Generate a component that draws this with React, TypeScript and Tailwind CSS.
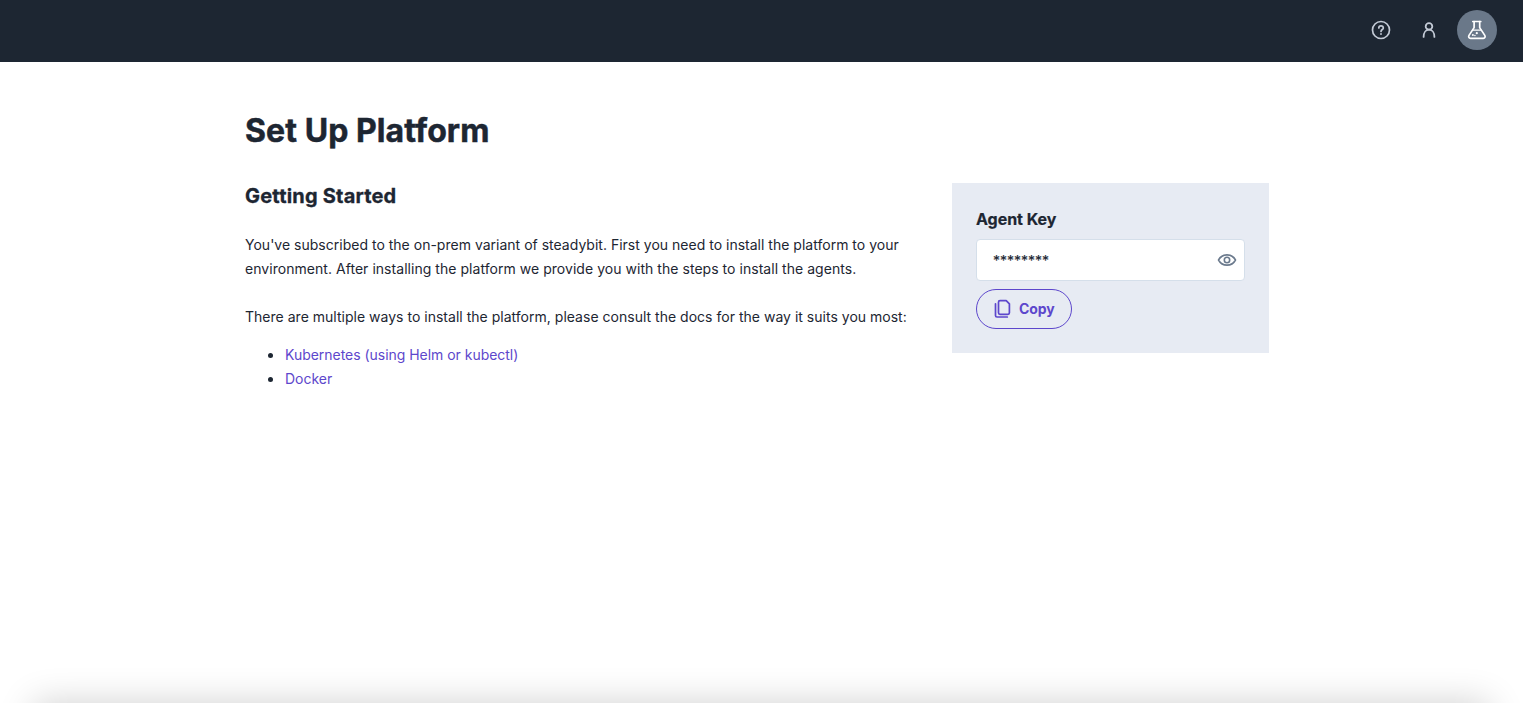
import React from "react";

function HelpIcon() {
  return (
    <svg width="20" height="20" viewBox="0 0 20 20" fill="none" stroke="#c3cad6" strokeWidth="1.7" strokeLinecap="round" strokeLinejoin="round">
      <circle cx="10" cy="10" r="8.5" />
      <path d="M7.800 8c0-1.300 1-2.200 2.200-2.200s2.300.9 2.300 2.100c0 1.600-2.300 1.700-2.300 3.500" />
      <path d="M10 14v.1" strokeWidth="1.9" />
    </svg>
  );
}

function UserIcon() {
  return (
    <svg width="20" height="20" viewBox="0 0 20 20" fill="none" stroke="#c3cad6" strokeWidth="1.8" strokeLinecap="round">
      <circle cx="10" cy="6.400" r="3.300" />
      <path d="M4.600 16.900c0-4.300 2.200-7.200 5.400-7.200s5.400 2.900 5.400 7.200" />
    </svg>
  );
}

function FlaskIcon() {
  return (
    <svg width="20" height="20" viewBox="0 0 20 20" fill="none" stroke="#fff" strokeWidth="1.7" strokeLinecap="round" strokeLinejoin="round">
      <path d="M5.800 1.500h8" />
      <path d="M7.100 1.700v5.900l-5.100 7.800c-.8 1.500-.1 3 1.500 3h12.800c1.600 0 2.300-1.500 1.500-3l-5.100-7.800V1.700" />
      <path d="M6 10.200h7.800" strokeWidth="1.300" />
      <circle cx="9.800" cy="13.200" r="1.100" fill="#fff" stroke="none" />
      <circle cx="5.900" cy="15" r="1" fill="#fff" stroke="none" />
      <circle cx="7.900" cy="15.500" r=".8" fill="#fff" stroke="none" />
    </svg>
  );
}

function EyeIcon() {
  return (
    <svg width="20" height="20" viewBox="0 0 20 20" fill="none" stroke="#6b7a8d" strokeWidth="1.600">
      <path d="M1.500 10C3.300 6.700 6.300 4.900 10 4.900s6.700 1.800 8.500 5.100c-1.800 3.300-4.800 5.100-8.500 5.100S3.300 13.300 1.500 10Z" strokeLinejoin="round" />
      <circle cx="10" cy="10" r="2.700" />
    </svg>
  );
}

function CopyIcon() {
  return (
    <svg width="20" height="20" viewBox="0 0 20 20" fill="none" stroke="#5d47cc" strokeWidth="1.700" strokeLinecap="round" strokeLinejoin="round">
      <path d="M7 1.700h6.200l3.200 3.200v8.900a1.500 1.500 0 0 1-1.500 1.500H7a1.500 1.500 0 0 1-1.500-1.500V3.200a1.500 1.500 0 0 1 1.500-1.500Z" />
      <path d="M2.500 4.800v11.700a1.500 1.500 0 0 0 1.500 1.500h10.300" />
    </svg>
  );
}

export default function App() {
  return (
    <div className="relative h-screen overflow-hidden bg-white font-['Inter',sans-serif] text-[#1d2632]">
      <header className="flex h-[62px] items-start justify-end gap-[18px] bg-[#1d2632] pt-2.5 pr-[26px]">
        <div className="flex h-10 items-center gap-7">
          <HelpIcon />
          <UserIcon />
        </div>
        <div className="flex size-10 items-center justify-center rounded-full bg-[#6a7889]">
          <FlaskIcon />
        </div>
      </header>
      <main className="ml-[245px] w-[1024px] pt-[49px]">
        <h1 className="text-[32px] leading-[40px] font-bold tracking-[0.08px] [-webkit-text-stroke:0.5px_#1d2632]">Set Up Platform</h1>
        <div className="mt-8 flex items-start justify-between">
          <section className="w-[675px] text-sm leading-6">
            <h2 className="text-xl leading-[26px] font-bold tracking-[0.2px] [-webkit-text-stroke:0.3px_#1d2632]">Getting Started</h2>
            <p className="mt-6">
              <span className="tracking-[0.01px]">
                You've subscribed to the on-prem variant of steadybit. First you need to install the platform to your
              </span>
              <br />
              <span className="tracking-[0.04px]">
                environment. After installing the platform we provide you with the steps to install the agents.
              </span>
            </p>
            <p className="mt-6 tracking-[0.015px]">
              There are multiple ways to install the platform, please consult the docs for the way it suits you most:
            </p>
            <ul className="mt-[13px] list-disc pl-10 tracking-[-0.03px] marker:text-[17px]">
              <li className="h-6"><a className="text-[#5d47cc]">Kubernetes (using Helm or kubectl)</a></li>
              <li className="h-6"><a className="text-[#5d47cc]">Docker</a></li>
            </ul>
          </section>
          <aside className="flex w-[317px] flex-col items-start gap-2 bg-[#e7ebf3] p-6">
            <div className="text-base leading-6 font-bold tracking-[-0.03px] [-webkit-text-stroke:0.2px_#1d2632]">Agent Key</div>
            <div className="flex h-[42px] w-full items-center justify-between rounded border border-[#d5dfea] bg-white pr-[7px] pl-4">
              <span className="pt-px text-sm [-webkit-text-stroke:0.15px_#1d2632]">********</span>
              <EyeIcon />
            </div>
            <button className="flex h-10 w-24 items-center gap-1.5 rounded-full border border-[#5d47cc] pl-4 text-sm font-bold tracking-[-0.05px] text-[#5d47cc]">
              <CopyIcon />
              Copy
            </button>
          </aside>
        </div>
      </main>
      <div className="absolute inset-x-[34px] top-full h-20 shadow-[0_0_36px_rgba(0,0,0,0.19)]" />
    </div>
  );
}
